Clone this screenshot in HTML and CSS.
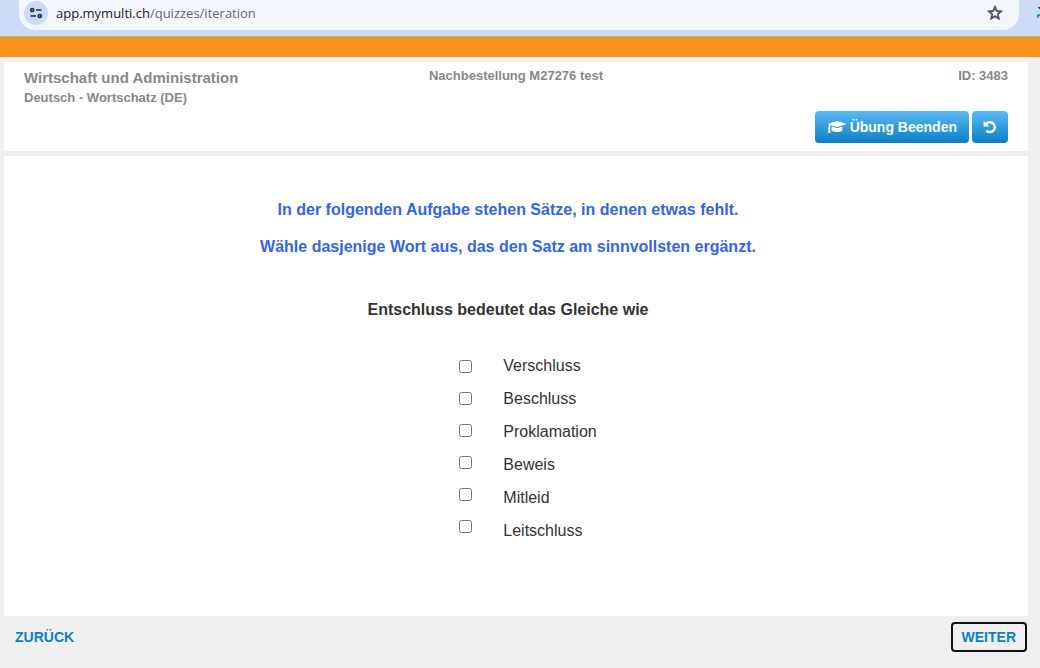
FILE: index.html
```html
<!DOCTYPE html>
<html lang="de">
<head>
  <meta charset="UTF-8">
  <meta name="viewport" content="width=device-width, initial-scale=1.0">
  <title>Deutsch - Wortschatz (DE)</title>
  <link rel="stylesheet" href="styles.css">
</head>
<body>
  <div class="browser-bar">
    <div class="address">
      <button type="button" class="site-info" aria-label="Website-Informationen">
        <svg width="14" height="12" viewBox="0 0 14 12" fill="none" stroke="#1f2937" stroke-width="1.7">
          <circle cx="3.2" cy="3" r="1.5"/>
          <path d="M7 3h5.5M1.5 9H7"/>
          <circle cx="10.8" cy="9" r="1.5"/>
        </svg>
      </button>
      <span class="url">app.mymulti.ch<span class="path">/quizzes/iteration</span></span>
      <button type="button" class="bookmark" aria-label="Lesezeichen">
        <svg width="18" height="18" viewBox="0 0 24 24" fill="#4a4d51" stroke="#4a4d51" stroke-width="0.9">
          <path d="M22 9.24l-7.19-.62L12 2 9.19 8.63 2 9.24l5.46 4.73L5.82 21 12 17.27 18.18 21l-1.63-7.03L22 9.24zM12 15.4l-3.76 2.27 1-4.28-3.32-2.88 4.38-.38L12 6.1l1.71 4.04 4.38.38-3.32 2.88 1 4.28L12 15.4z"/>
        </svg>
      </button>
    </div>
    <svg class="extension" width="3" height="14" viewBox="0 0 3 14">
      <path d="M1.500 1l2 2" stroke="#26354a" stroke-width="1.5"/>
      <path d="M0 12q0-3 3-3" stroke="#1b8fc4" stroke-width="2" fill="none"/>
    </svg>
  </div>
  <div class="stripe"></div>

  <main>
    <header class="panel quiz-header">
      <div class="course">
        <h1>Wirtschaft und Administration</h1>
        <p>Deutsch - Wortschatz (DE)</p>
      </div>
      <p class="order">Nachbestellung M27276 test</p>
      <div class="session">
        <p>ID: 3483</p>
        <div class="actions">
          <button type="button" class="btn">
            <svg width="20" height="14" viewBox="0 0 20 14" fill="#fff">
              <path d="M10 1L19.500 4 10 7 4 5.200C3.300 5.700 3 6.500 3 7.500c.7.5.7 1.300.1 1.700L3.700 13H.8l.6-3.800c-.6-.4-.6-1.200.1-1.700 0-1.100.2-2 .7-2.800L.5 4z"/>
              <path d="M4.800 6.500L10 8.200l5.200-1.700.3 3.200c0 1.300-2.500 2.300-5.500 2.300s-5.500-1-5.500-2.300z"/>
            </svg>
            Übung Beenden
          </button>
          <button type="button" class="btn btn-icon" aria-label="Neu starten">
            <svg width="14" height="14" viewBox="0 0 14 14" fill="none">
              <path d="M3 4.200A4.900 4.900 0 1 1 3.400 10.600" stroke="#fff" stroke-width="2.500"/>
              <path d="M.6.8V6.500H6.400z" fill="#fff"/>
            </svg>
          </button>
        </div>
      </div>
    </header>

    <section class="panel question">
      <p class="intro">In der folgenden Aufgabe stehen Sätze, in denen etwas fehlt.</p>
      <p class="intro">Wähle dasjenige Wort aus, das den Satz am sinnvollsten ergänzt.</p>
      <h2>Entschluss bedeutet das Gleiche wie</h2>
      <form class="answers">
        <div class="checks">
          <input type="checkbox" id="answer1">
          <input type="checkbox" id="answer2">
          <input type="checkbox" id="answer3">
          <input type="checkbox" id="answer4">
          <input type="checkbox" id="answer5">
          <input type="checkbox" id="answer6">
        </div>
        <div class="words">
          <label for="answer1">Verschluss</label>
          <label for="answer2">Beschluss</label>
          <label for="answer3">Proklamation</label>
          <label for="answer4">Beweis</label>
          <label for="answer5">Mitleid</label>
          <label for="answer6">Leitschluss</label>
        </div>
      </form>
    </section>
  </main>

  <footer class="pager">
    <button type="button">ZURÜCK</button>
    <button type="button" class="focused">WEITER</button>
  </footer>
</body>
</html>
```
FILE: styles.css
```css
* {
  box-sizing: border-box;
}
body {
  font-family: "Liberation Sans", Arial, sans-serif;
  margin: 0;
  background-color: #efefef;
  color: #333;
}
h1, h2, p {
  margin: 0;
}
button {
  font-family: inherit;
  border: none;
  padding: 0;
  cursor: pointer;
}

/* Browser bar */
.browser-bar {
  display: flex;
  justify-content: space-between;
  height: 37px;
  background-color: #ccdcf6;
  border-bottom: 1px solid #b3b0ad;
}
.address {
  flex: 1;
  display: flex;
  align-items: center;
  height: 30px;
  margin: 0 18px 0 19px;
  padding: 0 15px 4px 5px;
  background-color: #f3f7fd;
  border-radius: 0 0 16px 16px;
}
.site-info {
  display: flex;
  align-items: center;
  justify-content: center;
  width: 24px;
  height: 24px;
  border-radius: 50%;
  background-color: #ccdcf6;
}
.url {
  flex: 1;
  margin-left: 8px;
  font-family: "Open Sans", "Segoe UI", sans-serif;
  font-size: 13px;
  color: #1f2023;
}
.path {
  color: #63666b;
}
.bookmark {
  display: flex;
  background: none;
}
.extension {
  margin-top: 6px;
}
.stripe {
  height: 20px;
  background-color: #f7941e;
}

/* Panels */
main {
  display: flex;
  flex-direction: column;
  gap: 5px;
  padding: 5px 12px 0 4px;
}
.panel {
  background-color: #fff;
}
.quiz-header {
  display: grid;
  grid-template-columns: 1fr auto 1fr;
  padding: 6px 20px 8px;
  font-size: 13px;
  line-height: 16px;
  font-weight: bold;
  color: #888;
}
.course h1 {
  font-size: 15px;
  line-height: 20px;
}
.course p {
  line-height: 20px;
}
.session {
  text-align: right;
}
.actions {
  display: flex;
  justify-content: flex-end;
  gap: 3px;
  margin-top: 27px;
}
.btn {
  display: flex;
  align-items: center;
  gap: 3px;
  height: 32px;
  padding: 0 12px;
  border-radius: 4px;
  background: linear-gradient(#5bb9f5, #0a80c4);
  color: #fff;
  font-size: 14px;
  font-weight: bold;
}
.btn-icon {
  padding: 0 11px;
}

/* Question */
.question {
  padding: 44px 16px 69px 0;
  text-align: center;
}
.intro {
  margin-bottom: 17px;
  font-size: 16px;
  line-height: 20px;
  font-weight: bold;
  color: #3366e6;
}
.question h2 {
  margin-top: 43px;
  font-size: 16px;
  line-height: 20px;
}
.answers {
  display: flex;
  justify-content: center;
  gap: 31px;
  margin-top: 29px;
  padding-left: 40px;
}
.checks, .words {
  display: flex;
  flex-direction: column;
}
.checks {
  gap: 19px;
  padding-top: 11px;
}
.checks input {
  width: 13px;
  height: 13px;
  margin: 0;
}
.words label {
  font-size: 16px;
  line-height: 33px;
  text-align: left;
}

/* Pager */
.pager {
  display: flex;
  justify-content: space-between;
  padding: 6px 13px 16px 4px;
}
.pager button {
  height: 30px;
  padding: 0 9px;
  border: 2px solid transparent;
  border-radius: 4px;
  background: none;
  color: #0f80c1;
  font-size: 14px;
  font-weight: bold;
}
.pager .focused {
  border-color: #101010;
}
```
